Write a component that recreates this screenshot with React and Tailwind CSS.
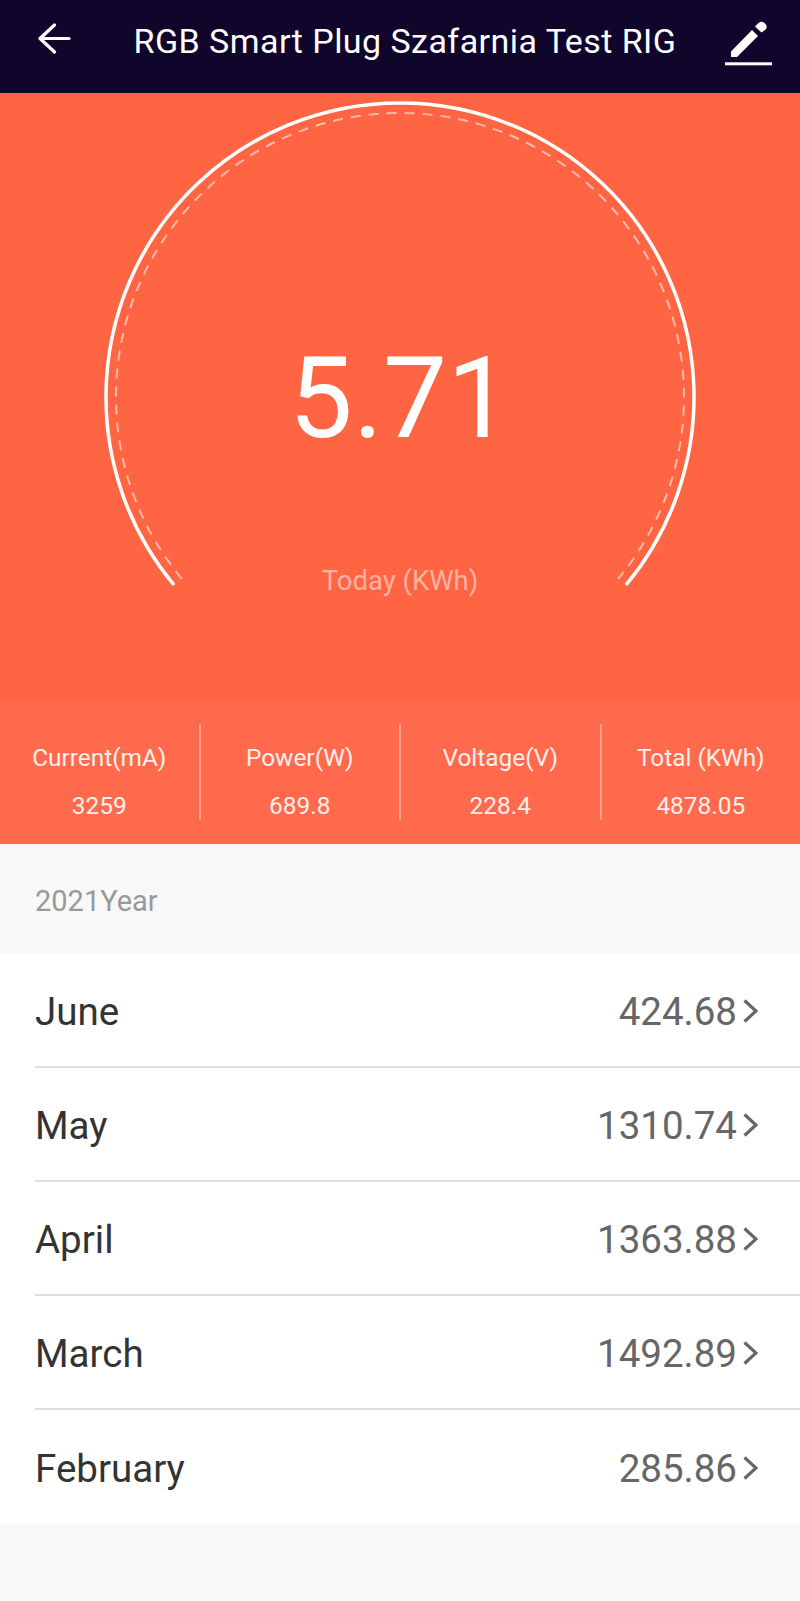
import { Fragment } from 'react';

const stats = [
  { label: 'Current(mA)', value: '3259' },
  { label: 'Power(W)', value: '689.8' },
  { label: 'Voltage(V)', value: '228.4' },
  { label: 'Total (KWh)', value: '4878.05' },
];

const months = [
  { name: 'June', value: '424.68' },
  { name: 'May', value: '1310.74' },
  { name: 'April', value: '1363.88' },
  { name: 'March', value: '1492.89' },
  { name: 'February', value: '285.86' },
];

function Gauge() {
  return (
    <svg width="800" height="607" viewBox="0 0 800 607" fill="none" className="block">
      {/* outer ring */}
      <path d="M174 492 A294 294 0 1 1 626 492" stroke="#fff" strokeWidth="3.5" />
      {/* dashed inner ring */}
      <path
        d="M182 486 A284 284 0 1 1 618 486"
        stroke="#fff"
        strokeOpacity="0.55"
        strokeWidth="2"
        strokeDasharray="10 8"
      />
    </svg>
  );
}

export default function App() {
  return (
    <div className="w-[800px] h-[1601px] bg-[#f8f8f8] font-['Roboto',sans-serif]">
      {/* header */}
      <div className="h-[93px] bg-[#10052b] relative flex items-start justify-center pt-[19px] pl-[10px]">
        <span className="text-white text-[34px] leading-[44px] tracking-[0.45px]">RGB Smart Plug Szafarnia Test RIG</span>
        <svg width="36" height="32" viewBox="0 0 36 32" fill="none" className="absolute left-[36px] top-[23px]">
          <path d="M18.5 2 L4 15.5 L18.5 29 M4 15.5 H33" stroke="#fff" strokeWidth="3.2" strokeLinecap="round" strokeLinejoin="round" />
        </svg>
        <svg width="48" height="50" viewBox="0 0 48 50" fill="none" className="absolute left-[725px] top-[19px]">
          <path d="M6 32.5 L27 11 L33 17 L12 38 H6 Z" fill="#fff" />
          <path d="M30 7.5 L33.5 4 Q36.5 1.5 39.5 4 L40.5 5 Q43 8 40.5 10.5 L36.5 13.5 Z" fill="#fff" />
          <rect x="0" y="43.3" width="47" height="3" fill="#fff" />
        </svg>
      </div>

      {/* gauge */}
      <div className="relative h-[607px] bg-[#ff6443]">
        <Gauge />
        <div className="absolute left-0 right-0 top-[237px] text-center text-white text-[114px] leading-[136px]">5.71</div>
        <div className="absolute left-0 right-0 top-[470px] text-center text-white/50 text-[27.5px] leading-[36px]">Today (KWh)</div>
      </div>

      {/* stats */}
      <div className="h-[144px] bg-[#ff694c] flex items-center">
        {stats.map((s, i) => (
          <Fragment key={s.label}>
            {i > 0 && <div className="w-[2px] h-[96px] bg-white/35" />}
            <div className="flex-1 text-center text-white/90 pt-[20px]">
              <div className="text-[24.4px] leading-[30px] mb-[18px]">{s.label}</div>
              <div className="text-[24.4px] leading-[30px]">{s.value}</div>
            </div>
          </Fragment>
        ))}
      </div>

      {/* year */}
      <div className="h-[110px] flex items-center pl-[35px] pt-[6px] text-[#999] text-[29px]">2021Year</div>

      {/* months */}
      <div className="bg-white pl-[35px]">
        {months.map((m, i) => (
          <div
            key={m.name}
            className={`h-[114px] flex items-center justify-between pr-[42px] pt-[3px] ${i < months.length - 1 ? 'border-b-2 border-[#dedede]' : ''}`}
          >
            <span className="text-[#333] text-[38.5px]">{m.name}</span>
            <div className="flex items-center gap-[6px]">
              <span className="text-[#666] text-[38.5px]">{m.value}</span>
              <svg width="15" height="24" viewBox="0 0 15 24" fill="none" className="-mt-[2px]">
                <path d="M1.5 1.5 L13 12 L1.5 22.5" stroke="#666" strokeWidth="3.2" />
              </svg>
            </div>
          </div>
        ))}
      </div>
    </div>
  );
}
